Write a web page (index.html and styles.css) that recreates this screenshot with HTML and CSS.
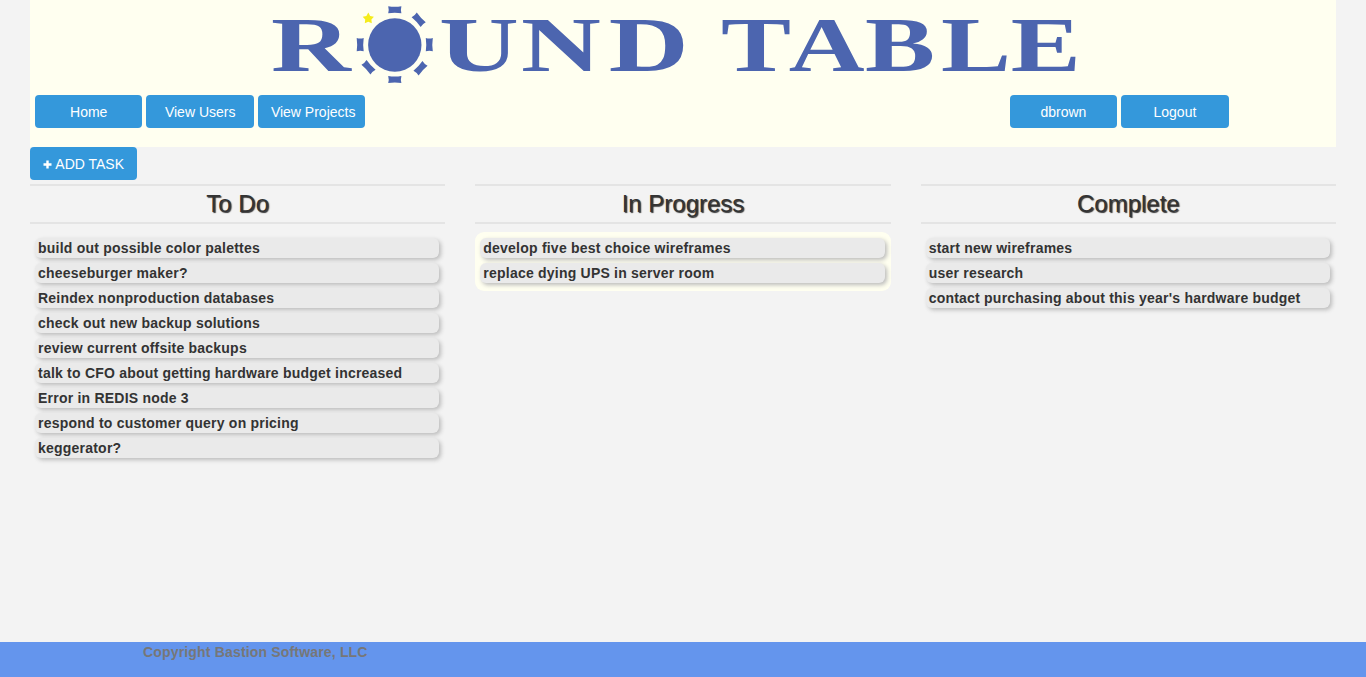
FILE: index.html
```html
<!DOCTYPE html>
<html lang="en">
<head>
<meta charset="utf-8">
<title>Round Table</title>
<link rel="stylesheet" href="styles.css">
</head>
<body>
<div class="page">
  <header class="banner">
    <svg class="logo" width="830" height="90" viewBox="261 0 830 90" role="img" aria-label="Round Table">
      <defs>
        <path id="seat" d="M-6.6-3.5Q0-2.5 6.6-3.5Q5.6 0 6.6 3.5Q0 2.6-6.6 3.5Q-5.6 0-6.6-3.5Z"/>
      </defs>
      <g class="logo-ink">
        <g transform="scale(1.4 1)" class="logo-text">
          <text y="71" x="193.5">R</text>
          <text y="71" x="313.5 372.2 434.8">UND</text>
        </g>
        <g transform="scale(1.33 1)" class="logo-text">
          <text y="71" x="542.2 593 650.4 707.6 760">TABLE</text>
        </g>
        <circle cx="394.8" cy="45" r="26.7"/>
        <use href="#seat" transform="translate(394.8 9.7)"/>
        <use href="#seat" transform="translate(394.8 79.5)"/>
        <use href="#seat" transform="translate(360.2 44.7) rotate(90)"/>
        <use href="#seat" transform="translate(429.3 44.7) rotate(90)"/>
        <use href="#seat" transform="translate(418.7 19.8) rotate(47)"/>
        <use href="#seat" transform="translate(420.5 68.3) rotate(-47)"/>
        <use href="#seat" transform="translate(368.5 67.2) rotate(47)"/>
      </g>
      <path class="logo-star" d="M368.3 12.5L370.2 15.9L373.9 16.7L371.4 19.5L371.8 23.3L368.3 21.7L364.8 23.3L365.2 19.5L362.7 16.7L366.4 15.9Z"/>
    </svg>
    <nav class="nav">
      <div class="nav-group">
        <a class="btn">Home</a>
        <a class="btn">View Users</a>
        <a class="btn btn-wide-label">View Projects</a>
      </div>
      <div class="nav-group">
        <a class="btn">dbrown</a>
        <a class="btn">Logout</a>
      </div>
    </nav>
  </header>
  <a class="btn btn-add"><svg class="plus" width="9" height="9" viewBox="0 0 9 9"><path d="M3.3.5h2.4v2.8h2.8v2.4H5.7v2.8H3.3V5.7H.5V3.3h2.8z"/></svg>ADD TASK</a>
  <main class="board">
    <section class="column">
      <h2 class="column-title">To Do</h2>
      <ul class="tasks">
        <li class="task">build out possible color palettes</li>
        <li class="task">cheeseburger maker?</li>
        <li class="task">Reindex nonproduction databases</li>
        <li class="task">check out new backup solutions</li>
        <li class="task">review current offsite backups</li>
        <li class="task">talk to CFO about getting hardware budget increased</li>
        <li class="task">Error in REDIS node 3</li>
        <li class="task">respond to customer query on pricing</li>
        <li class="task">keggerator?</li>
      </ul>
    </section>
    <section class="column">
      <h2 class="column-title">In Progress</h2>
      <ul class="tasks tasks-active">
        <li class="task">develop five best choice wireframes</li>
        <li class="task">replace dying UPS in server room</li>
      </ul>
    </section>
    <section class="column">
      <h2 class="column-title">Complete</h2>
      <ul class="tasks">
        <li class="task">start new wireframes</li>
        <li class="task">user research</li>
        <li class="task">contact purchasing about this year's hardware budget</li>
      </ul>
    </section>
  </main>
</div>
<footer class="footer">Copyright Bastion Software, LLC</footer>
</body>
</html>
```
FILE: styles.css
```css
* { box-sizing: border-box; }
body {
  margin: 0;
  height: 677px;
  display: flex;
  flex-direction: column;
  background: #f3f3f3;
  color: #333;
  font: 14px/20px "Liberation Sans", Arial, sans-serif;
}
.page { flex: 1; padding: 0 30px; }
.banner { height: 147px; background: #fffff0; }
.logo { display: block; margin-left: 231px; }
.logo-ink { fill: #4c65af; }
.logo-text { font: bold 79px "Liberation Serif", "Times New Roman", serif; }
.logo-star { fill: #f5ec1c; }
.nav {
  display: flex;
  justify-content: space-between;
  padding: 5px 107.4px 0 5px;
}
.nav-group { display: flex; gap: 4.1px; }
.btn {
  display: flex;
  align-items: center;
  justify-content: center;
  width: 107.4px;
  height: 33px;
  padding-top: 1px;
  border-radius: 4px;
  background: #3498db;
  color: #fff;
  white-space: nowrap;
}
.btn-wide-label { padding-left: 3px; }
.btn-add { gap: 3px; }
.plus { fill: #fff; }
.board {
  display: grid;
  grid-template-columns: repeat(3, 1fr);
  column-gap: 30px;
  align-items: start;
  margin-top: 4px;
}
.column-title {
  height: 40px;
  margin: 0 0 8px;
  border: solid #e4e4e4;
  border-width: 2px 0;
  font-size: 24px;
  font-weight: normal;
  line-height: 35px;
  text-align: center;
  text-shadow: 1px 1px 1px #333;
}
.tasks {
  display: grid;
  gap: 5px;
  margin: 0;
  padding: 6px 6px 8px 5px;
  list-style: none;
  border-radius: 9px;
}
.tasks-active { background: #fffff0; }
.task {
  height: 20px;
  padding-left: 3px;
  border-radius: 6px;
  background: #eaeaea;
  box-shadow: 2px 2px 4px #bbb;
  font-weight: bold;
  letter-spacing: .22px;
  white-space: nowrap;
}
.footer {
  height: 35px;
  padding-left: 143px;
  background: #6495ed;
  color: #777;
  font-weight: bold;
  letter-spacing: .17px;
}
```
